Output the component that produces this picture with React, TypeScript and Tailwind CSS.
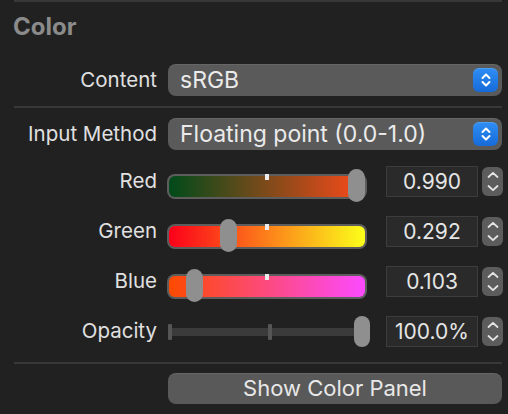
import React from 'react';

const FONT = "font-['Inter','Liberation_Sans',sans-serif]";

/** 팝업 오른쪽 파란 버튼의 위/아래 화살표 */
function PopupArrows() {
    return (
        <div className="flex h-[24px] w-[25px] items-center justify-center rounded-[6px] bg-linear-to-b from-[#2f8ef5] to-[#166ad8] shadow-[inset_0_1px_0_rgba(255,255,255,0.15)]">
            <svg width="12" height="16" viewBox="0 0 12 16" fill="none" stroke="white" strokeWidth="2" strokeLinecap="round" strokeLinejoin="round">
                <path d="M2.5 6 L6 2.5 L9.5 6" />
                <path d="M2.5 10 L6 13.5 L9.5 10" />
            </svg>
        </div>
    );
}

function Popup({ value }: { value: string }) {
    return (
        <div className="ml-[11px] flex h-[32px] w-[334px] items-center justify-between rounded-[8px] bg-[#5a5a5a] pl-[12px] pr-[4px] shadow-[inset_0_1px_0_rgba(255,255,255,0.08)]">
            <span className="text-[23px] text-[#ebebeb]">{value}</span>
            <PopupArrows />
        </div>
    );
}

function Stepper() {
    return (
        <div className="ml-[4px] mt-[1px] flex h-[29px] w-[21px] flex-col items-center justify-between rounded-[6px] bg-[#5c5c5c] py-[4px]">
            <svg width="12" height="8" viewBox="0 0 12 8" fill="none" stroke="#e4e4e4" strokeWidth="1.8" strokeLinecap="round" strokeLinejoin="round">
                <path d="M1.5 6 L6 1.8 L10.5 6" />
            </svg>
            <svg width="12" height="8" viewBox="0 0 12 8" fill="none" stroke="#e4e4e4" strokeWidth="1.8" strokeLinecap="round" strokeLinejoin="round">
                <path d="M1.5 2 L6 6.2 L10.5 2" />
            </svg>
        </div>
    );
}

function NumberField({ value }: { value: string }) {
    return (
        <div className="ml-[19px] flex h-[31px] w-[92px] items-center justify-center border border-[#3d3d3d] bg-[#2a2a2a] text-[21px] text-[#e5e5e5]">
            {value}
        </div>
    );
}

function Label({ children }: { children: React.ReactNode }) {
    return (
        <div className="flex h-[31px] w-[157px] shrink-0 items-center justify-end text-[20.5px] text-[#e0e0e0]">
            {children}
        </div>
    );
}

type ColorSliderProps = {
    label: string;
    value: number;
    gradient: string;
};

function ColorSliderRow({ label, value, gradient }: ColorSliderProps) {
    return (
        <div className="flex h-[50px] items-start">
            <Label>{label}</Label>
            <div className="relative ml-[10px] h-[36px] w-[200px]">
                <div className="mt-[8px] h-[25px] w-[200px] rounded-[8px] bg-[#5d5d5d] p-[2px]">
                    <div className={`h-full w-full rounded-[6px] ${gradient}`} />
                </div>
                {/* 가운데 눈금 */}
                <div className="absolute left-[98px] top-[8px] h-[6px] w-[4px] bg-[#ececec]" />
                <div
                    className="absolute top-[3px] h-[33px] w-[17px] rounded-full bg-[#8f8f8f]"
                    style={{ left: value * (200 - 17) }}
                />
            </div>
            <NumberField value={value.toFixed(3)} />
            <Stepper />
        </div>
    );
}

function Separator() {
    return <div className="ml-[14px] h-[2px] w-[488px] bg-[#373737]" />;
}

export default function App() {
    const red = 0.99;
    const green = 0.292;
    const blue = 0.103;

    return (
        <div className={`h-[414px] w-[508px] overflow-hidden bg-[#212121] ${FONT}`}>
            <Separator />
            <h2 className="mt-[10px] pl-[13px] text-[24px] font-bold leading-[30px] text-[#8b8b8b]">Color</h2>

            <div className="mt-[22px] flex h-[32px] items-center">
                <div className="w-[157px] text-right text-[20.5px] text-[#e0e0e0]">Content</div>
                <Popup value="sRGB" />
            </div>

            <div className="mt-[10px]">
                <Separator />
            </div>

            <div className="mt-[10px] flex h-[32px] items-center">
                <div className="w-[157px] text-right text-[20.5px] text-[#e0e0e0]">Input Method</div>
                <Popup value="Floating point (0.0-1.0)" />
            </div>

            <div className="mt-[16px]">
                <ColorSliderRow
                    label="Red"
                    value={red}
                    gradient="bg-[linear-gradient(to_right,#004a1a,#fc4a1a)]"
                />
                <ColorSliderRow
                    label="Green"
                    value={green}
                    gradient="bg-[linear-gradient(to_right,#fc001a,#fcff1a)]"
                />
                <ColorSliderRow
                    label="Blue"
                    value={blue}
                    gradient="bg-[linear-gradient(to_right,#fc4a00,#fc4aff)]"
                />

                {/* 불투명도: 얇은 트랙 + 눈금 */}
                <div className="flex h-[46px] items-start">
                    <Label>Opacity</Label>
                    <div className="relative ml-[11px] h-[31px] w-[202px]">
                        <div className="ml-[4px] mt-[12px] h-[8px] w-[196px] bg-[#3b3b3b]" />
                        <div className="absolute left-0 top-[8px] h-[16px] w-[4px] rounded-[1px] bg-[#555555]" />
                        <div className="absolute left-[100px] top-[8px] h-[16px] w-[4px] rounded-[1px] bg-[#555555]" />
                        <div className="absolute left-[186px] top-0 h-[31px] w-[16px] rounded-full bg-[#8f8f8f]" />
                    </div>
                    <div className="ml-[16px] flex h-[31px] w-[92px] items-center justify-center border border-[#3d3d3d] bg-[#2a2a2a] text-[21px] text-[#e5e5e5]">
                        100.0%
                    </div>
                    <Stepper />
                </div>
            </div>

            <Separator />

            <div className="mt-[9px] flex">
                <button
                    type="button"
                    className="ml-[168px] flex h-[31px] w-[334px] items-center justify-center rounded-[8px] bg-[#595959] text-[22px] text-[#e8e8e8] shadow-[inset_0_1px_0_rgba(255,255,255,0.08)]"
                >
                    Show Color Panel
                </button>
            </div>
        </div>
    );
}
